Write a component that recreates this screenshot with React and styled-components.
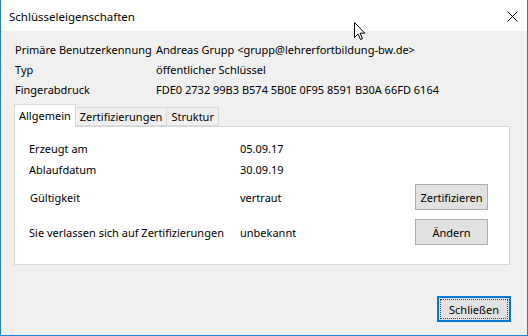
import React from 'react'
import styled, { createGlobalStyle } from 'styled-components'

const GlobalStyle = createGlobalStyle`
  html, body {
    margin: 0;
    padding: 0;
    background: #ffffff;
  }
  body {
    font-family: "Segoe UI", "Noto Sans", sans-serif;
    font-size: 11px;
    color: #000000;
  }
`

const info = [
  ['Primäre Benutzerkennung', 'Andreas Grupp <grupp@lehrerfortbildung-bw.de>'],
  ['Typ', 'öffentlicher Schlüssel'],
  ['Fingerabdruck', 'FDE0 2732 99B3 B574 5B0E 0F95 8591 B30A 66FD 6164'],
]

const tabs = ['Allgemein', 'Zertifizierungen', 'Struktur']

function App() {
  return (
    <>
      <GlobalStyle />
      <Window>
        <TitleBar>
          <Title>Schlüsseleigenschaften</Title>
          <CloseIcon width="11" height="11" viewBox="0 0 11 11">
            <path d="M0.5 0.5 L10.5 10.5 M10.5 0.5 L0.5 10.5" stroke="#000" strokeWidth="1" fill="none" />
          </CloseIcon>
        </TitleBar>

        <Body>
          <InfoGrid>
            {info.map(([label, value]) => (
              <React.Fragment key={label}>
                <InfoLabel>{label}</InfoLabel>
                <InfoValue>{value}</InfoValue>
              </React.Fragment>
            ))}
          </InfoGrid>

          <TabBar>
            {tabs.map((t, i) => (
              <Tab key={t} $active={i === 0}>{t}</Tab>
            ))}
          </TabBar>

          <Panel>
            <Row $h={21}>
              <Cell>Erzeugt am</Cell>
              <Cell>05.09.17</Cell>
            </Row>
            <Row $h={21}>
              <Cell>Ablaufdatum</Cell>
              <Cell>30.09.19</Cell>
            </Row>
            <Row $h={26} $mt={4}>
              <Cell $indent>Gültigkeit</Cell>
              <Cell>vertraut</Cell>
              <Button>Zertifizieren</Button>
            </Row>
            <Row $h={26} $mt={9}>
              <Cell>Sie verlassen sich auf Zertifizierungen</Cell>
              <Cell>unbekannt</Cell>
              <Button>Ändern</Button>
            </Row>
          </Panel>

          <Footer>
            <DefaultButton>
              <FocusRing>Schließen</FocusRing>
            </DefaultButton>
          </Footer>
        </Body>

        <Cursor width="12" height="19" viewBox="0 0 12 19">
          <path
            d="M0.5 0.5 L0.5 15.5 L4 12 L6.5 17.5 L8.5 16.6 L6 11.2 L10.8 11.2 Z"
            fill="#ffffff"
            stroke="#000000"
            strokeWidth="1"
            strokeLinejoin="miter"
          />
        </Cursor>
      </Window>
    </>
  )
}

export default App

const Window = styled.div`
  position: relative;
  width: 528px;
  height: 336px;
  box-sizing: border-box;
  border: 1px solid #1883d7;
  border-top: none;
  display: flex;
  flex-direction: column;
  background: #f0f0f0;
  overflow: hidden;
`

const TitleBar = styled.div`
  height: 31px;
  flex: none;
  background: #ffffff;
  display: flex;
  align-items: center;
  justify-content: space-between;
  padding: 0 9px 0 8px;
`

const Title = styled.span`
  font-size: 11.5px;
  padding-top: 1px;
`

const CloseIcon = styled.svg`
  display: block;
  margin-top: 1px;
`

const Body = styled.div`
  flex: 1;
  display: flex;
  flex-direction: column;
  padding: 8px 16px 13px 13px;
`

const InfoGrid = styled.div`
  display: grid;
  grid-template-columns: 141px 1fr;
  grid-auto-rows: 20px;
  align-items: center;
  padding-left: 1px;
`

const InfoLabel = styled.span`
  white-space: nowrap;
`

const InfoValue = styled.span`
  white-space: nowrap;
`

const TabBar = styled.div`
  display: flex;
  align-items: flex-end;
  height: 22px;
  margin-top: 5px;
  position: relative;
  z-index: 1;
`

const Tab = styled.div`
  box-sizing: border-box;
  height: ${p => (p.$active ? '23px' : '19px')};
  margin-bottom: ${p => (p.$active ? '-1px' : '0')};
  padding: ${p => (p.$active ? '0 4px 1px 4px' : '0 4px')};
  display: flex;
  align-items: center;
  background: ${p => (p.$active ? '#ffffff' : '#f0f0f0')};
  border: 1px solid #d9d9d9;
  border-bottom: ${p => (p.$active ? 'none' : '1px solid #d9d9d9')};
  margin-left: ${p => (p.$active ? '0' : '-1px')};
  white-space: nowrap;

  &:first-child {
    margin-left: 0;
  }
`

const Panel = styled.div`
  height: 139px;
  box-sizing: border-box;
  margin-right: 1px;
  background: #ffffff;
  border: 1px solid #d9d9d9;
  padding: 11px 21px 0 14px;
  display: flex;
  flex-direction: column;
`

const Row = styled.div`
  display: grid;
  grid-template-columns: 211px 1fr 73px;
  align-items: center;
  height: ${p => p.$h}px;
  margin-top: ${p => p.$mt || 0}px;
`

const Cell = styled.span`
  white-space: nowrap;
  padding-left: ${p => (p.$indent ? '1px' : '0')};
`

const Button = styled.button`
  font: inherit;
  color: #000000;
  height: 26px;
  width: 73px;
  box-sizing: border-box;
  background: #e1e1e1;
  border: 1px solid #adadad;
  padding: 0;
  margin: 0;
  display: flex;
  align-items: center;
  justify-content: center;
`

const Footer = styled.div`
  margin-top: auto;
  display: flex;
  justify-content: flex-end;
`

const DefaultButton = styled.button`
  font: inherit;
  color: #000000;
  width: 74px;
  height: 26px;
  box-sizing: border-box;
  background: #e1e1e1;
  border: 2px solid #0078d7;
  padding: 1px;
  margin: 0;
  display: flex;
`

const FocusRing = styled.span`
  flex: 1;
  display: flex;
  align-items: center;
  justify-content: center;
  border: 1px dotted #4a4a4a;
`

const Cursor = styled.svg`
  position: absolute;
  left: 353px;
  top: 22px;
  display: block;
`
